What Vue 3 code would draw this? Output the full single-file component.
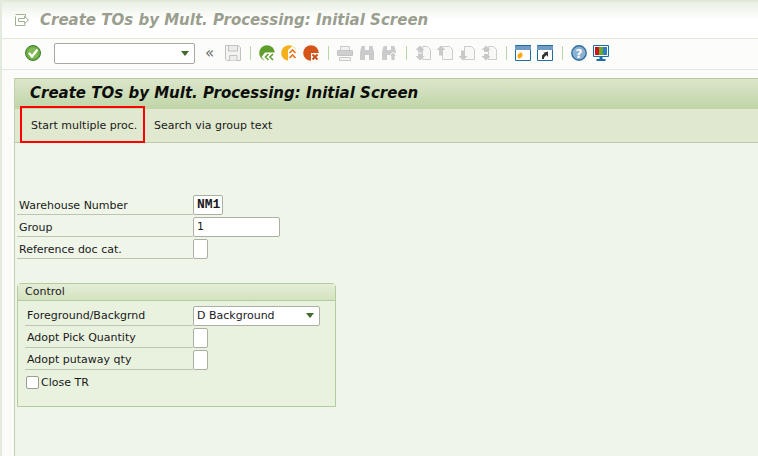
<template>
  <div class="page">
    <header class="titlebar">
      <svg class="exit" width="16" height="14" viewBox="0 0 16 14"><path d="M1.500 3.500v9h9.500v-2M1.500 1.500h10v2.500M4.500 5.500h6V3.500l4 3.500-4 3.500V8.500h-6z" fill="none" stroke="#a3b195" stroke-width="1"/></svg>
      <h1 class="wintitle">Create TOs by Mult. Processing: Initial Screen</h1>
    </header>
    <nav class="toolbar">
      <svg class="ic" width="16" height="16" viewBox="0 0 16 16"><circle cx="8" cy="8" r="7.500" fill="#6aa93e" stroke="#3f7f33"/><circle cx="8" cy="8" r="5.500" fill="#82bb54"/><path d="M4 8l3 3.500L12.500 4.500" fill="none" stroke="#fff" stroke-width="2.200"/></svg>
      <div class="cmd"><span class="arrow"></span></div>
      <span class="chev">«</span>
      <svg class="ic" width="16" height="16" viewBox="0 0 16 16"><path d="M.5.500h13l2 2v13H2l-1.500-1.500z" fill="#f3f4f1" stroke="#c2c2c2"/><path d="M3.500 1v5h9V1M4.500 15.500v-5h7.500v5" fill="#ececec" stroke="#c2c2c2"/></svg>
      <i class="sep"></i>
      <svg class="ic" width="16" height="16" viewBox="0 0 16 16"><circle cx="8" cy="8" r="7.800" fill="#5f9e2c"/><path d="M6 7.500h10V16H6L2.500 12z" fill="#fff"/><path d="M9.500 9l-3 3 3 3M14 9l-3 3 3 3" fill="none" stroke="#5f9e2c" stroke-width="1.600"/></svg>
      <svg class="ic" width="16" height="16" viewBox="0 0 16 16"><circle cx="8" cy="8" r="7.800" fill="#f5b11b"/><path d="M11.500 1L16 6v10H7V5z" fill="#fff"/><path d="M8.500 8l3-3 3 3M8.500 13l3-3 3 3" fill="none" stroke="#e9741c" stroke-width="1.700"/></svg>
      <svg class="ic" width="16" height="16" viewBox="0 0 16 16"><circle cx="8" cy="8" r="7.800" fill="#d4541a"/><path d="M8 8h8v8H8z" fill="#fff"/><path d="M9.500 9.500l5 5M14.500 9.500l-5 5" stroke="#cf4d18" stroke-width="2"/></svg>
      <i class="sep"></i>
      <svg class="ic" width="16" height="16" viewBox="0 0 16 16"><path d="M3.500 1.500h9v4h-9z" fill="#f2f2f2" stroke="#c9c9c9"/><path d="M.5 5.500h15v5H.5z" fill="#cfcfcf" stroke="#c4c4c4"/><path d="M2.500 12.500h11v3h-11z" fill="#f2f2f2" stroke="#c9c9c9"/></svg>
      <svg class="ic" width="16" height="16" viewBox="0 0 16 16"><path d="M2.500 1h3.500v14H1V7zM13.500 1H10v14h5V7zM6 5h4v5H6z" fill="#cbcbcb"/></svg>
      <svg class="ic" width="16" height="16" viewBox="0 0 16 16"><path d="M2.500 1h3.500v14H1V7zM13.500 1H10v7h5V7zM6 5h4v5H6z" fill="#cbcbcb"/><path d="M12 7l3.500 4H14v4.500h-4V11H8.500z" fill="#cbcbcb" stroke="#fcfdfb" stroke-width=".8"/></svg>
      <i class="sep"></i>
      <svg class="ic" width="16" height="16" viewBox="0 0 16 16"><path d="M7.500 1.500h5l3 3v10h-8z" fill="#f8f8f6" stroke="#cdcdcd"/><path d="M5 .5L9.500 5H7v2.500H3V5H.5zM3 8.500h4V11h2.500L5 15.500.5 11H3z" fill="#c9c9c9"/></svg>
      <svg class="ic" width="16" height="16" viewBox="0 0 16 16"><path d="M5.500 1.500h7l3 3v10h-10z" fill="#f8f8f6" stroke="#cdcdcd"/><path d="M4 .5L8.500 5H6v5.500H2V5H-.5z" fill="#c9c9c9"/></svg>
      <svg class="ic" width="16" height="16" viewBox="0 0 16 16"><path d="M5.500 1.500h7l3 3v10h-10z" fill="#f8f8f6" stroke="#cdcdcd"/><path d="M4 15.500L8.500 11H6V5.500H2V11H-.5z" fill="#c9c9c9"/></svg>
      <svg class="ic" width="16" height="16" viewBox="0 0 16 16"><path d="M7.500 1.500h5l3 3v10h-8z" fill="#f8f8f6" stroke="#cdcdcd"/><path d="M5 .5L9.500 5H7v2H3V5H.5zM3 9h4v2h2.500L5 15.500.5 11H3z" fill="#c9c9c9"/></svg>
      <i class="sep"></i>
      <svg class="ic" width="16" height="16" viewBox="0 0 16 16"><path d="M.5.500h15v15H.5z" fill="#fff" stroke="#1f6ca3"/><path d="M0 0h16v5H0z" fill="#6e9cc6"/><path d="M.5 0H16V1H.5z" fill="#1f6ca3"/><path d="M5 6.500l.8 1.700 1.700-.8-.7 1.800 1.700.8-1.700.8.700 1.800-1.700-.7L5 14.500l-.8-1.600-1.700.7.700-1.800-1.700-.8 1.700-.8-.7-1.800 1.700.8z" fill="#f6a70d"/></svg>
      <svg class="ic" width="16" height="16" viewBox="0 0 16 16"><path d="M.5.500h15v15H.5z" fill="#fff" stroke="#1f6ca3"/><path d="M0 0h16v5H0z" fill="#6e9cc6"/><path d="M.5 0H16V1H.5z" fill="#1f6ca3"/><path d="M5 14v-3.500L7.500 8H6l5-1.500V12L9.500 10 7 12.500V14z" fill="#333"/></svg>
      <i class="sep"></i>
      <svg class="ic" width="16" height="16" viewBox="0 0 16 16"><circle cx="8" cy="8" r="7.200" fill="#8db1d3" stroke="#2f6f9f" stroke-width="1.400"/><text x="8" y="12.500" text-anchor="middle" class="q">?</text></svg>
      <svg class="ic" width="16" height="16" viewBox="0 0 16 16"><path d="M.5.500h15v11H.5z" fill="#fff" stroke="#1f6ca3"/><path d="M2 2h4v8H2z" fill="#c8161d"/><path d="M6 2h4v8H6z" fill="#6aa82e"/><path d="M10 2h4v8h-4z" fill="#2d7fc1"/><path d="M6.500 12h3v2h3v2h-9v-2h3z" fill="#1f6ca3"/></svg>
    </nav>
    <div class="body">
      <main class="content">
        <h2 class="scrtitle">Create TOs by Mult. Processing: Initial Screen</h2>
        <div class="appbar">
          <span class="btn active">Start multiple proc.</span>
          <span class="btn">Search via group text</span>
        </div>
        <section class="form">
          <div class="row"><label>Warehouse Number</label><span class="input w3 mono">NM1</span></div>
          <div class="row"><label>Group</label><span class="input w9">1</span></div>
          <div class="row"><label>Reference doc cat.</label><span class="input w1"></span></div>
        </section>
        <section class="group">
          <div class="grouphead">Control</div>
          <div class="groupbody">
            <div class="row"><label>Foreground/Backgrnd</label><span class="input sel">D Background<span class="arrow"></span></span></div>
            <div class="row"><label>Adopt Pick Quantity</label><span class="input w1"></span></div>
            <div class="row"><label>Adopt putaway qty</label><span class="input w1"></span></div>
            <div class="chk"><span class="box"></span>Close TR</div>
          </div>
        </section>
      </main>
    </div>
  </div>
</template>

<script setup>
</script>

<style>
html, body { margin: 0; background: #fff; overflow: hidden; }
</style>

<style scoped>
.page { width: 758px; height: 456px; box-sizing: border-box; border-left: 2px solid #e4ebde; display: flex; flex-direction: column; font-family: "DejaVu Sans", sans-serif; font-size: 11px; color: #1a1a1a; overflow: hidden; background: #fbfcf9; }
.titlebar { height: 39px; flex: none; box-sizing: border-box; border-top: 2px solid #e2e9da; border-bottom: 1px solid #dfe5d8; background: linear-gradient(#eaf0e5, #fff 50%); display: flex; align-items: center; padding: 0 0 0 12px; }
.wintitle { margin: 0 0 0 10px; font-size: 15px; font-weight: bold; font-style: italic; color: #9a9e8e; line-height: 1; }
.toolbar { height: 31px; flex: none; box-sizing: border-box; border-bottom: 1px solid #e3e7de; display: flex; align-items: center; padding: 0 0 2px 23px; background: #fcfdfb; }
.ic { flex: none; display: block; margin-right: 6px; overflow: visible; }
.cmd { flex: none; width: 139px; height: 19px; margin-left: 7px; border: 1px solid #a8a8a0; border-radius: 2px; background: #fff; position: relative; }
.arrow { position: absolute; right: 5px; top: 7px; width: 0; height: 0; border: 4px solid transparent; border-top: 5px solid #3f6b2c; border-bottom: 0; }
.chev { flex: none; width: 20px; box-sizing: border-box; margin-left: 10px; font-size: 15px; color: #666; line-height: 1; }
.sep { flex: none; width: 1px; height: 14px; background: #b6d8a4; margin: 0 8px 0 3px; }
.q { font: bold 12px "DejaVu Sans", sans-serif; fill: #fff; }
.body { flex: 1; min-height: 0; padding: 8px 0 0 12px; box-sizing: border-box; }
.content { height: 100%; background: #eff5e9; border-left: 1px solid #c0d0ae; }
.scrtitle { margin: 0; height: 31px; box-sizing: border-box; border-top: 1px solid #b5caa0; background: linear-gradient(#dbe6ca, #c0d5a8); padding-left: 15px; font-size: 15px; line-height: 28px; font-weight: bold; font-style: italic; color: #0c0c0c; }
.appbar { height: 34px; box-sizing: border-box; border-bottom: 1px solid #b9c9a8; background: #e0e8cf; display: flex; align-items: center; padding-left: 5px; }
.btn { height: 33px; line-height: 33px; box-sizing: border-box; padding: 0 9px; white-space: nowrap; }
.btn.active { width: 125px; height: 37px; margin-top: -3px; line-height: 36px; border: 2px solid #f00; padding: 0 0 0 9px; }
.form { padding: 51px 0 0 2px; }
.row { display: flex; height: 22px; align-items: flex-start; }
.row label { width: 176px; height: 21px; box-sizing: border-box; border-bottom: 1px solid #bcc4b4; padding-left: 2px; line-height: 24px; white-space: nowrap; }
.input { display: block; height: 20px; margin-top: 1px; box-sizing: border-box; background: #fff; border: 1px solid #aab0a4; border-radius: 2px; line-height: 18px; padding-left: 3px; position: relative; }
.w3 { width: 30px; }
.w9 { width: 87px; }
.w1 { width: 15px; }
.mono { font-family: "Liberation Mono", monospace; font-size: 13px; font-weight: bold; }
.group { margin: 23px 0 0 2px; width: 319px; height: 124px; box-sizing: border-box; border: 1px solid #b4cb9c; border-radius: 4px 4px 0 0; background: #e9f1df; }
.grouphead { height: 16px; line-height: 15px; padding-left: 7px; border-bottom: 1px solid #b4cb9c; background: linear-gradient(#e5eed8, #d3e2bf); }
.groupbody { padding: 4px 0 0 7px; }
.groupbody .row label { width: 168px; line-height: 22px; }
.sel { width: 127px; }
.sel .arrow { right: 5px; top: 6px; }
.chk { display: flex; align-items: center; height: 22px; margin-left: 1px; }
.box { width: 13px; height: 13px; box-sizing: border-box; border: 1px solid #9a9e94; border-radius: 2px; background: #fff; margin-right: 2px; }
</style>
